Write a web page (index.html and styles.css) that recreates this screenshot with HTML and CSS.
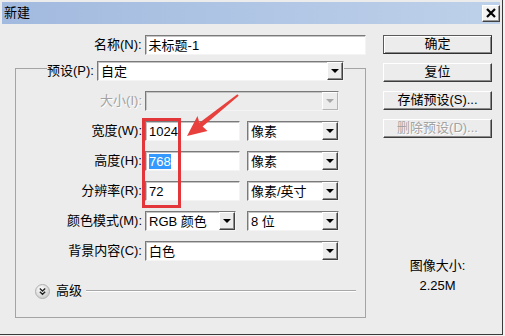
FILE: index.html
```html
<!DOCTYPE html>
<html lang="zh">
<head>
<meta charset="utf-8">
<title>新建</title>
<link rel="stylesheet" href="styles.css">
</head>
<body>
<div class="window">
  <div class="titlebar">
    <span class="title">新建</span>
    <span class="close"><svg width="10" height="10" viewBox="0 0 10 10"><path d="M1 1 L9 9 M9 1 L1 9" stroke="#000" stroke-width="2.2" fill="none"/></svg></span>
  </div>
  <div class="content">
    <div class="main">
      <div class="name-row">
        <span class="lbl">名称(N):</span>
        <div class="input name-input">未标题-1</div>
      </div>
      <fieldset class="frame">
        <legend class="preset">
          <span class="plabel">预设(P):</span>
          <div class="select preset-sel"><span>自定</span><i class="arrow"></i></div>
        </legend>
        <div class="rows">
          <div class="row">
            <span class="lbl disabled">大小(I):</span>
            <div class="select full is-disabled"><i class="arrow"></i></div>
          </div>
          <div class="row">
            <span class="lbl">宽度(W):</span>
            <div class="input num">1024</div>
            <div class="select unit"><span>像素</span><i class="arrow"></i></div>
          </div>
          <div class="row">
            <span class="lbl">高度(H):</span>
            <div class="input num"><span class="sel">768</span></div>
            <div class="select unit"><span>像素</span><i class="arrow"></i></div>
          </div>
          <div class="row">
            <span class="lbl">分辨率(R):</span>
            <div class="input num">72</div>
            <div class="select unit"><span>像素/英寸</span><i class="arrow"></i></div>
          </div>
          <div class="row">
            <span class="lbl">颜色模式(M):</span>
            <div class="select mode"><span>RGB 颜色</span><i class="arrow"></i></div>
            <div class="select unit"><span>8 位</span><i class="arrow"></i></div>
          </div>
          <div class="row">
            <span class="lbl">背景内容(C):</span>
            <div class="select full"><span>白色</span><i class="arrow"></i></div>
          </div>
        </div>
        <div class="adv">
          <svg class="adv-icon" width="15" height="15" viewBox="0 0 15 15">
            <defs>
              <radialGradient id="g" cx="0.4" cy="0.35" r="0.7">
                <stop offset="0" stop-color="#ffffff"/>
                <stop offset="1" stop-color="#c9c9c9"/>
              </radialGradient>
            </defs>
            <circle cx="7.5" cy="7.5" r="7" fill="url(#g)" stroke="#b0b0b0" stroke-width="1"/>
            <path d="M4.8 4.6 L7.5 7 L10.2 4.6 M4.8 7.8 L7.5 10.2 L10.2 7.8" stroke="#222" stroke-width="1.4" fill="none"/>
          </svg>
          <span class="adv-text">高级</span>
          <span class="adv-line"></span>
        </div>
      </fieldset>
    </div>
    <div class="side">
      <div class="btn default">确定</div>
      <div class="btn">复位</div>
      <div class="btn">存储预设(S)...</div>
      <div class="btn disabled">删除预设(D)...</div>
      <div class="info">
        <div>图像大小:</div>
        <div class="size">2.25M</div>
      </div>
    </div>
  </div>
  <div class="redbox"></div>
  <svg class="pointer" width="505" height="336" viewBox="0 0 505 336">
    <polygon points="237.4,94.2 199.4,122.7 197.5,116 187,136 207.5,131 202.6,126.6 238.7,95.8" fill="#e8403c"/>
  </svg>
</div>
</body>
</html>
```
FILE: styles.css
```css
* {
  box-sizing: border-box;
}

html, body {
  margin: 0;
  padding: 0;
}

body {
  background: #f2f2f2;
  font-family: "Liberation Sans", "Noto Sans CJK SC", sans-serif;
  font-size: 13px;
  line-height: 16px;
  color: #000;
}

.window {
  position: relative;
  width: 503px;
  height: 335px;
  background: #ececec;
  border-right: 1px solid #3a3a3a;
  border-bottom: 1px solid #3a3a3a;
  padding: 2px 2px 0 2px;
  overflow: hidden;
}

.titlebar {
  height: 22px;
  background: linear-gradient(to right, #a2badf, #bed1ea);
  display: flex;
  align-items: center;
  justify-content: space-between;
  padding-left: 2px;
}

.close {
  width: 18px;
  height: 17px;
  background: #f3f3f3;
  border: 1px solid;
  border-color: #ffffff #404040 #404040 #ffffff;
  box-shadow: inset -1px -1px 0 #9a9a9a;
  display: flex;
  align-items: center;
  justify-content: center;
}

.close svg {
  display: block;
}

.content {
  display: flex;
  gap: 17px;
}

.main {
  width: 364px;
  padding-top: 11px;
}

.name-row {
  display: flex;
  align-items: center;
  gap: 3px;
}

.name-row .lbl {
  width: 140px;
  text-align: right;
}

.input {
  height: 20px;
  background: #fff;
  border: 1px solid;
  border-color: #7a7a7a #f4f4f4 #f4f4f4 #7a7a7a;
  box-shadow: inset 1px 1px 0 #c4c4c4;
  padding: 1px 3px;
  line-height: 17px;
  white-space: nowrap;
}

.name-input {
  width: 222px;
}

.frame {
  margin: 0 0 0 13px;
  width: 351px;
  min-width: 0;
  padding: 10px 0 18px 0;
  border: 1px solid #a4a4a4;
}

.preset {
  margin-left: 31px;
  padding: 6px 0 0 0;
  display: flex;
  align-items: center;
}

.plabel {
  margin-right: 3px;
}

.select {
  position: relative;
  height: 20px;
  background: #fff;
  border: 1px solid;
  border-color: #7a7a7a #f4f4f4 #f4f4f4 #7a7a7a;
  box-shadow: inset 1px 1px 0 #c4c4c4;
  padding: 1px 3px;
  line-height: 17px;
  white-space: nowrap;
}

.preset-sel {
  width: 247px;
}

.arrow {
  position: absolute;
  right: 0;
  top: 0;
  width: 16px;
  height: 18px;
  background: #ececec;
  border: 1px solid;
  border-color: #ffffff #404040 #404040 #ffffff;
  box-shadow: inset -1px -1px 0 #8c8c8c;
}

.arrow::after {
  content: "";
  position: absolute;
  left: 3px;
  top: 6px;
  border-left: 4px solid transparent;
  border-right: 4px solid transparent;
  border-top: 4px solid #000;
}

.rows {
  display: flex;
  flex-direction: column;
  gap: 10px;
}

.row {
  display: flex;
  align-items: center;
  height: 20px;
}

.row .lbl {
  width: 126px;
  text-align: right;
  margin-right: 3px;
}

.lbl.disabled {
  color: #a3a3a3;
  text-shadow: 1px 1px 0 #ffffff;
}

.num {
  width: 95px;
}

.sel {
  background: #3399ff;
  color: #fff;
}

.unit {
  width: 92px;
  margin-left: 7px;
}

.full {
  width: 194px;
}

.mode {
  width: 91px;
}

.mode + .unit {
  margin-left: 11px;
}

.is-disabled {
  background: #ececec;
}

.is-disabled .arrow {
  box-shadow: none;
  border-color: #ffffff #b4b4b4 #b4b4b4 #ffffff;
}

.is-disabled .arrow::after {
  border-top-color: #a8a8a8;
}

.adv {
  display: flex;
  align-items: center;
  height: 16px;
  margin-top: 22px;
}

.adv-icon {
  display: block;
  margin-left: 19px;
}

.adv-text {
  margin-left: 6px;
}

.adv-line {
  flex: 1;
  height: 2px;
  border-top: 1px solid #a8a8a8;
  border-bottom: 1px solid #ffffff;
  margin: 0 9px 0 4px;
}

.side {
  width: 109px;
  padding-top: 11px;
  display: flex;
  flex-direction: column;
  gap: 9px;
}

.btn {
  height: 19px;
  background: #ececec;
  border: 1px solid;
  border-color: #ffffff #3c3c3c #3c3c3c #ffffff;
  box-shadow: inset -1px -1px 0 #8a8a8a;
  text-align: center;
  line-height: 16px;
  white-space: nowrap;
}

.btn.default {
  border-color: #5a5a5a #303030 #303030 #5a5a5a;
  box-shadow: inset 1px 1px 0 #ffffff, inset -1px -1px 0 #8a8a8a;
}

.btn.disabled {
  color: #a3a3a3;
  text-shadow: 1px 1px 0 #ffffff;
}

.info {
  margin-top: 111px;
  text-align: center;
}

.size {
  margin-top: 4px;
}

.redbox {
  position: absolute;
  left: 142px;
  top: 118px;
  width: 39px;
  height: 90px;
  border: 3px solid #e3363a;
}

.pointer {
  position: absolute;
  left: 0;
  top: 0;
  pointer-events: none;
}
```
